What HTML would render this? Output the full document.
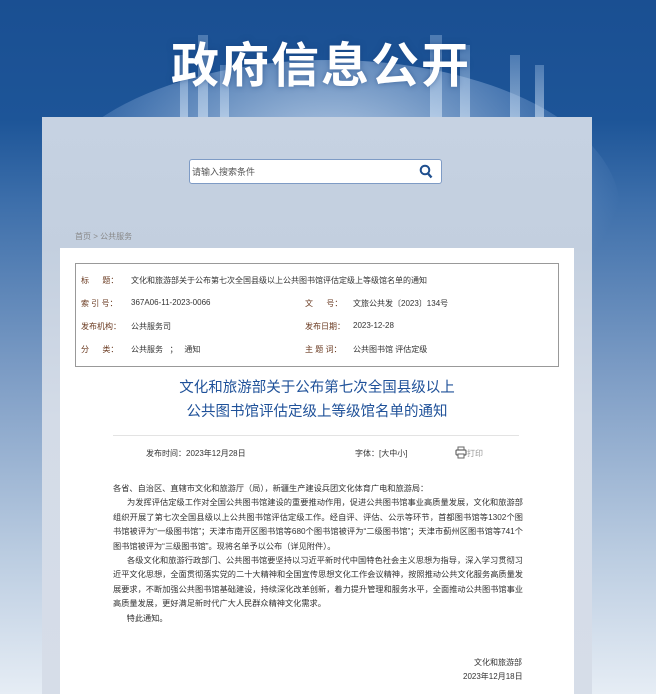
<!DOCTYPE html>
<html style="width:656px;height:694px;overflow:hidden"><head><meta charset="utf-8"><style>
*{margin:0;padding:0;box-sizing:border-box}
body{width:656px;height:694px;overflow:hidden;position:relative;font-family:"Liberation Sans","Noto Sans CJK SC",sans-serif;
background:linear-gradient(180deg,#1a4f92 0px,#1d5598 120px,#3c6eaa 200px,#7f9ec6 380px,#b9cbe0 550px,#e6edf5 694px)}
.glow{position:absolute;left:40px;top:60px;width:580px;height:300px;border-radius:50%;background:radial-gradient(ellipse at 50% 35%,rgba(230,240,252,.8),rgba(160,190,230,.35) 50%,rgba(30,80,150,0) 72%)}
.bld{position:absolute;bottom:0;background:linear-gradient(180deg,rgba(170,200,235,.35),rgba(220,235,250,.6))}
.h1{position:absolute;left:0;width:656px;top:26px;text-align:center;color:#fff;font-size:48px;font-weight:bold;letter-spacing:2px;font-family:"Noto Sans CJK SC",sans-serif;text-shadow:0 0 6px rgba(20,60,120,.5);padding-right:14px}
.panel{position:absolute;left:42px;top:117px;width:550px;height:577px;background:linear-gradient(180deg,#c6d2e2,#c3cfdf 130px,#d3dbe7 300px,#d6dde8)}
.search{position:absolute;left:189px;top:159px;width:253px;height:25px;background:#fff;border:1px solid #7e9bc5;border-radius:3px;font-size:9px;color:#555;padding:5px 0 0 2px}
.crumb{position:absolute;left:75px;top:231px;font-size:8px;color:#888}
.white{position:absolute;left:60px;top:248px;width:514px;height:446px;background:#fff}
.box{position:absolute;left:75px;top:263px;width:484px;height:104px;border:1px solid #999}
.r{position:absolute;font-size:8px;color:#333;white-space:nowrap}
.l{color:#6a3a20}
.t{position:absolute;left:60px;width:514px;text-align:center;color:#1f5199;font-size:14.5px;line-height:24px}
.p{position:absolute;left:113px;width:410px;font-size:8.2px;line-height:14.4px;color:#333;text-align:justify}
</style></head><body>
<div class="glow"></div>
<div style="position:absolute;left:80px;top:0;width:500px;height:125px">
<div class="bld" style="left:100px;width:8px;height:70px"></div>
<div class="bld" style="left:118px;width:10px;height:90px"></div>
<div class="bld" style="left:140px;width:9px;height:60px"></div>
<div class="bld" style="left:350px;width:12px;height:90px"></div>
<div class="bld" style="left:380px;width:10px;height:80px"></div>
<div class="bld" style="left:430px;width:10px;height:70px"></div>
<div class="bld" style="left:455px;width:9px;height:60px"></div>
</div>
<div class="h1">政府信息公开</div>
<div class="panel"></div>
<div class="search">请输入搜索条件
<svg style="position:absolute;right:8px;top:4px" width="14" height="15" viewBox="0 0 14 15"><circle cx="6" cy="6" r="4.3" fill="none" stroke="#1f4f8f" stroke-width="2"/><path d="M9 9.5l3.5 4" stroke="#1f4f8f" stroke-width="2.4"/></svg></div>
<div class="crumb">首页 &gt; 公共服务</div>
<div class="white"></div>
<div class="box"></div>
<div class="r" style="left:81px;top:275px"><span class="l">标&nbsp;&nbsp;&nbsp;&nbsp;&nbsp;&nbsp;题：</span></div>
<div class="r" style="left:131px;top:275px">文化和旅游部关于公布第七次全国县级以上公共图书馆评估定级上等级馆名单的通知</div>
<div class="r l" style="left:81px;top:298px">索 引 号：</div>
<div class="r" style="left:131px;top:298px">367A06-11-2023-0066</div>
<div class="r l" style="left:305px;top:298px">文&nbsp;&nbsp;&nbsp;&nbsp;&nbsp;&nbsp;号：</div>
<div class="r" style="left:353px;top:298px">文旅公共发〔2023〕134号</div>
<div class="r l" style="left:81px;top:321px">发布机构：</div>
<div class="r" style="left:131px;top:321px">公共服务司</div>
<div class="r l" style="left:305px;top:321px">发布日期：</div>
<div class="r" style="left:353px;top:321px">2023-12-28</div>
<div class="r l" style="left:81px;top:344px">分&nbsp;&nbsp;&nbsp;&nbsp;&nbsp;&nbsp;类：</div>
<div class="r" style="left:131px;top:344px">公共服务&nbsp;&nbsp;&nbsp;；&nbsp;&nbsp;&nbsp;通知</div>
<div class="r l" style="left:305px;top:344px">主 题 词：</div>
<div class="r" style="left:353px;top:344px">公共图书馆 评估定级</div>
<div class="t" style="top:376px">文化和旅游部关于公布第七次全国县级以上</div>
<div class="t" style="top:400px">公共图书馆评估定级上等级馆名单的通知</div>
<div style="position:absolute;left:113px;top:435px;width:406px;border-top:1px solid #e3e3e3"></div>
<div class="r" style="left:146px;top:448px">发布时间：2023年12月28日</div>
<div class="r" style="left:355px;top:448px">字体：[大中小]</div>
<svg style="position:absolute;left:455px;top:446px" width="12" height="13" viewBox="0 0 12 13"><rect x="3" y="1" width="6" height="3" fill="none" stroke="#666"/><rect x="1" y="4" width="10" height="5" rx="1" fill="none" stroke="#666" stroke-width="1.2"/><rect x="3" y="8" width="6" height="4" fill="#fff" stroke="#666"/></svg>
<div class="r" style="left:467px;top:448px;color:#999">打印</div>
<div class="p" style="top:482px">各省、自治区、直辖市文化和旅游厅（局），新疆生产建设兵团文化体育广电和旅游局：<br>
&nbsp;&nbsp;&nbsp;&nbsp;&nbsp;&nbsp;为发挥评估定级工作对全国公共图书馆建设的重要推动作用，促进公共图书馆事业高质量发展，文化和旅游部组织开展了第七次全国县级以上公共图书馆评估定级工作。经自评、评估、公示等环节，首都图书馆等1302个图书馆被评为“一级图书馆”；天津市南开区图书馆等680个图书馆被评为“二级图书馆”；天津市蓟州区图书馆等741个图书馆被评为“三级图书馆”。现将名单予以公布（详见附件）。<br>
&nbsp;&nbsp;&nbsp;&nbsp;&nbsp;&nbsp;各级文化和旅游行政部门、公共图书馆要坚持以习近平新时代中国特色社会主义思想为指导，深入学习贯彻习近平文化思想，全面贯彻落实党的二十大精神和全国宣传思想文化工作会议精神，按照推动公共文化服务高质量发展要求，不断加强公共图书馆基础建设，持续深化改革创新，着力提升管理和服务水平，全面推动公共图书馆事业高质量发展，更好满足新时代广大人民群众精神文化需求。<br>
&nbsp;&nbsp;&nbsp;&nbsp;&nbsp;&nbsp;特此通知。</div>
<div class="r" style="left:474px;top:657px">文化和旅游部</div>
<div class="r" style="left:463px;top:671px">2023年12月18日</div>
</body></html>
